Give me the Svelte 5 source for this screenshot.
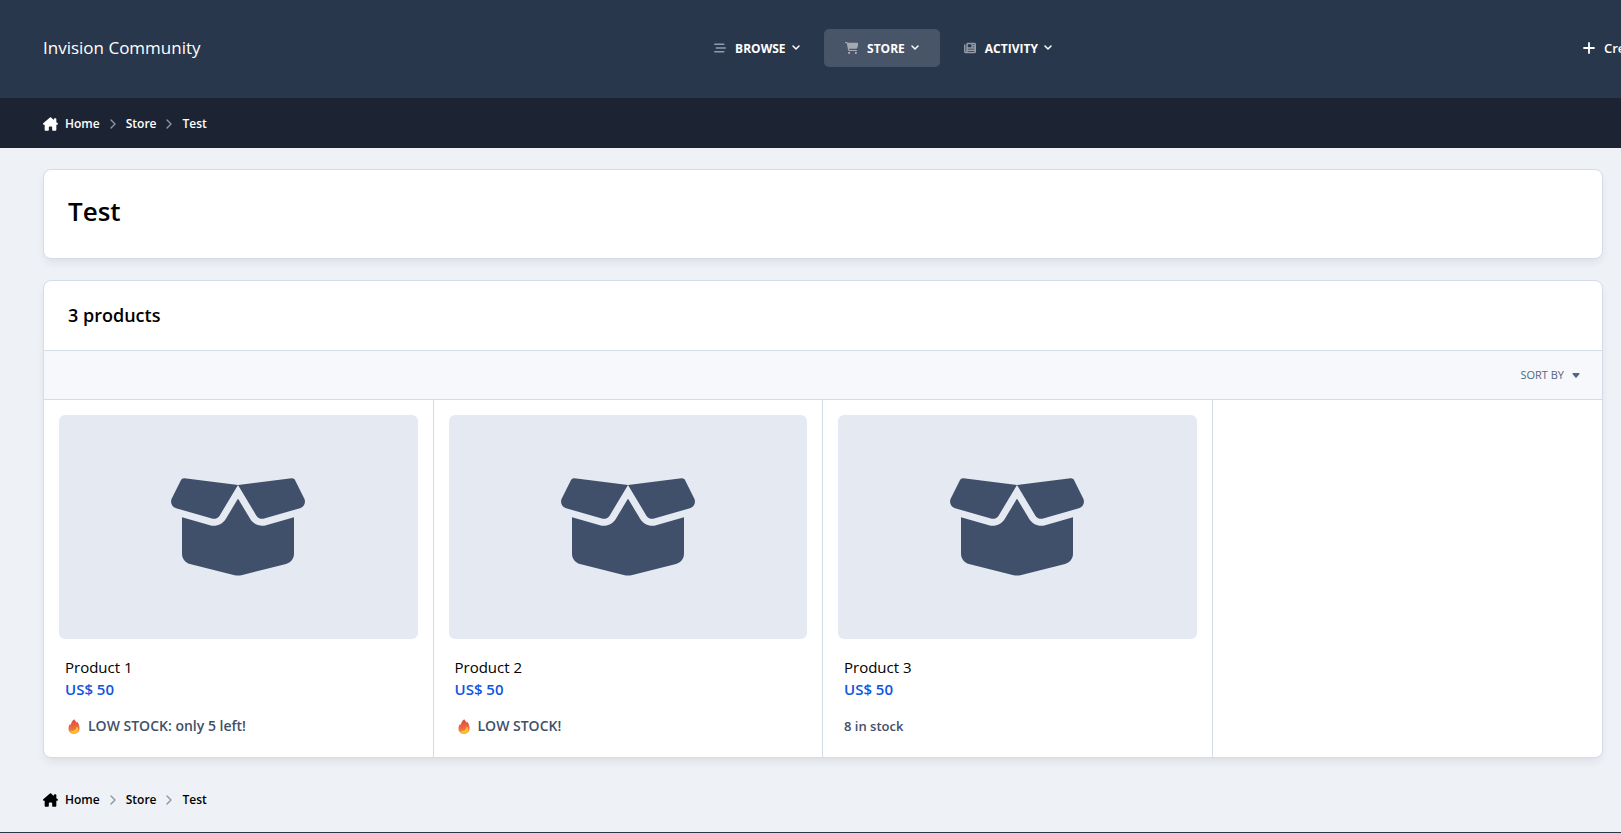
<script>
  const navItems = [
    {
      label: 'Browse',
      viewBox: '0 0 512 512',
      icon: 'M0 96C0 78.3 14.3 64 32 64H416c17.7 0 32 14.3 32 32s-14.3 32-32 32H32C14.3 128 0 113.7 0 96zM64 256c0-17.7 14.3-32 32-32H480c17.7 0 32 14.3 32 32s-14.3 32-32 32H96c-17.7 0-32-14.3-32-32zM448 416c0 17.7-14.3 32-32 32H32c-17.7 0-32-14.3-32-32s14.3-32 32-32H416c17.7 0 32 14.3 32 32z'
    },
    {
      label: 'Store',
      active: true,
      viewBox: '0 0 576 512',
      icon: 'M0 24C0 10.7 10.7 0 24 0H69.5c22 0 41.5 12.8 50.6 32h411c26.3 0 45.5 25 38.6 50.4l-41 152.3c-8.5 31.4-37 53.3-69.5 53.3H170.7l5.4 28.5c2.2 11.3 12.1 19.5 23.6 19.5H488c13.3 0 24 10.7 24 24s-10.7 24-24 24H199.7c-34.6 0-64.3-24.6-70.7-58.5L77.4 54.5c-.7-3.8-4-6.5-7.9-6.5H24C10.7 48 0 37.3 0 24zM128 464a48 48 0 1 1 96 0 48 48 0 1 1 -96 0zm336-48a48 48 0 1 1 0 96 48 48 0 1 1 0-96z'
    },
    {
      label: 'Activity',
      viewBox: '0 0 512 512',
      icon: 'M96 96c0-35.3 28.7-64 64-64H448c35.3 0 64 28.7 64 64V416c0 35.3-28.7 64-64 64H80c-44.2 0-80-35.8-80-80V128c0-17.7 14.3-32 32-32s32 14.3 32 32V400c0 8.8 7.2 16 16 16s16-7.2 16-16V96zm64 24v80c0 13.3 10.7 24 24 24H296c13.3 0 24-10.7 24-24V120c0-13.3-10.7-24-24-24H184c-13.3 0-24 10.7-24 24zm208-8c0 8.8 7.2 16 16 16h48c8.8 0 16-7.2 16-16s-7.2-16-16-16H384c-8.8 0-16 7.2-16 16zm0 96c0 8.8 7.2 16 16 16h48c8.8 0 16-7.2 16-16s-7.2-16-16-16H384c-8.8 0-16 7.2-16 16zM160 304c0 8.8 7.2 16 16 16H432c8.8 0 16-7.2 16-16s-7.2-16-16-16H176c-8.8 0-16 7.2-16 16zm0 96c0 8.8 7.2 16 16 16H432c8.8 0 16-7.2 16-16s-7.2-16-16-16H176c-8.8 0-16 7.2-16 16z'
    }
  ];

  const products = [
    { name: 'Product 1', price: 'US$ 50', stock: 'LOW STOCK: only 5 left!', low: true },
    { name: 'Product 2', price: 'US$ 50', stock: 'LOW STOCK!', low: true },
    { name: 'Product 3', price: 'US$ 50', stock: '8 in stock', low: false }
  ];

  const crumbs = ['Home', 'Store', 'Test'];
</script>

{#snippet breadcrumb(label)}
  <nav class="breadcrumb" aria-label={label}>
    <ol>
      {#each crumbs as crumb, i}
        <li>
          {#if i === 0}
            <svg class="house" viewBox="0 0 576 512" aria-hidden="true">
              <path d="M543.8 287.6c17 0 32-14 32-32.1c1-9-3-17-11-24L512 185V64c0-17.7-14.3-32-32-32H448c-17.7 0-32 14.3-32 32v36.7L309.5 7c-6-5-14-7-21-7s-15 1-22 8L10 231.5c-7 7-10 15-10 24c0 18 14 32.1 32 32.1h32v69.7c-.1 .9-.1 1.8-.1 2.8V472c0 22.1 17.9 40 40 40h16c1.2 0 2.4-.1 3.6-.2c1.5 .1 3 .2 4.5 .2H160h24c22.1 0 40-17.9 40-40V448 384c0-17.7 14.3-32 32-32h64c17.7 0 32 14.3 32 32v64 24c0 22.1 17.9 40 40 40h24 32.5c1.4 0 2.8 0 4.2-.1c1.1 .1 2.2 .1 3.3 .1h16c22.1 0 40-17.9 40-40V455.8c.3-2.6 .5-5.3 .5-8.1l-.7-160.2h32z" />
            </svg>
          {:else}
            <svg class="sep" viewBox="0 0 6 10" aria-hidden="true">
              <path d="M1 1l4 4-4 4" />
            </svg>
          {/if}
          <a href="#{crumb.toLowerCase()}">{crumb}</a>
        </li>
      {/each}
    </ol>
  </nav>
{/snippet}

<div class="page">
  <header class="header">
    <div class="header-inner">
      <a class="logo" href="#home">Invision Community</a>
      <nav class="menu" aria-label="Main">
        {#each navItems as item}
          <button class="menu-item" class:active={item.active}>
            <svg class="menu-icon" viewBox={item.viewBox} aria-hidden="true">
              <path d={item.icon} />
            </svg>
            <span>{item.label}</span>
            <svg class="chevron" viewBox="0 0 8 6" aria-hidden="true">
              <path d="M1 1l3 3 3-3" />
            </svg>
          </button>
        {/each}
      </nav>
      <button class="create">
        <svg viewBox="0 0 12 12" aria-hidden="true">
          <path d="M6 1v10M1 6h10" />
        </svg>
        <span>Create</span>
      </button>
    </div>
  </header>

  <div class="crumb-bar">
    {@render breadcrumb('Breadcrumb')}
  </div>

  <main>
    <section class="box title-box">
      <h1>Test</h1>
    </section>

    <section class="box">
      <h2>{products.length} products</h2>
      <div class="toolbar">
        <button class="sort">
          <span>Sort by</span>
          <svg viewBox="0 0 8 5" aria-hidden="true">
            <path d="M1 0h6q1 0.3 0.5 1L4.6 4.4q-0.6 0.5-1.2 0L0.5 1Q0 0.3 1 0z" />
          </svg>
        </button>
      </div>
      <ul class="grid">
        {#each products as product}
          <li class="product">
            <a class="thumb" href="#product" aria-label={product.name}>
              <svg viewBox="0 0 640 512" aria-hidden="true">
                <path d="M58.9 42.1c3-6.1 9.6-9.6 16.3-8.7L320 64 564.8 33.4c6.7-.8 13.3 2.7 16.3 8.7l41.7 83.4c9 17.9-.6 39.6-19.8 45.1L439.6 217.3c-13.9 4-28.8-1.9-36.2-14.3L320 64 236.6 203c-7.4 12.4-22.3 18.3-36.2 14.3L37.1 170.6c-19.3-5.5-28.8-27.2-19.8-45.1L58.9 42.1zM321.1 128l54.9 91.4c14.9 24.8 44.6 36.6 72.5 28.6L576 211.6v167c0 22-15 41.2-36.4 46.6l-204.1 51c-10.2 2.6-20.9 2.6-31 0l-204.1-51C79 419.7 64 400.5 64 378.5v-167L191.6 248c27.8 8 57.6-3.8 72.5-28.6L318.9 128h2.2z" />
              </svg>
            </a>
            <div class="info">
              <a class="name" href="#product">{product.name}</a>
              <span class="price">{product.price}</span>
              <p class="stock" class:low={product.low}>
                {#if product.low}
                  <svg class="flame" viewBox="0 0 12 15" aria-hidden="true">
                    <defs>
                      <linearGradient id="flame-outer" x1="0" y1="0" x2="0" y2="1">
                        <stop offset="0" stop-color="#e0483c" />
                        <stop offset="0.6" stop-color="#ec6c40" />
                        <stop offset="1" stop-color="#f5942e" />
                      </linearGradient>
                    </defs>
                    <path fill="url(#flame-outer)" d="M6.400.2C6.800 1.700 8 2.500 9 3.700c.2-.4.3-.8.2-1.300 1.500 1.900 2.300 4.300 2.300 6.800 0 3.400-2.200 5.600-5.500 5.600S.5 12.700.5 9.500c0-2.200.8-3.600 1.600-4.800.1.700.3 1.100.7 1.400C3.100 3.500 4.300 1.500 6.400.2z" />
                    <path fill="#fdbf30" d="M8.700 7.200c1.100 1.100 1.800 2.400 1.700 3.900-.2 2.100-1.800 3.400-4.100 3.400-2.200 0-3.700-1.100-3.900-2.900 1 .6 2.200.6 3.200-.1C7.200 10.900 8.600 9.500 8.700 7.200z" />
                  </svg>
                {/if}
                <span>{product.stock}</span>
              </p>
            </div>
          </li>
        {/each}
      </ul>
    </section>

    {@render breadcrumb('Breadcrumb, bottom')}
  </main>

  <footer></footer>
</div>

<style>
  :global(body) {
    background: #eef1f6;
  }

  .page {
    overflow: hidden;
    font-family: 'Open Sans', 'Noto Sans', sans-serif;
    font-size: 14px;
    color: #000;
  }

  a {
    color: inherit;
    text-decoration: none;
  }

  button {
    display: flex;
    align-items: center;
    padding: 0;
    border: 0;
    background: none;
    color: inherit;
    font: inherit;
    cursor: pointer;
  }

  .header {
    background: #29374c;
    color: #fff;
  }

  .header-inner {
    display: grid;
    grid-template-columns: 1fr auto 1fr;
    align-items: center;
    margin-right: -145px;
    padding: 29px 43px 31px;
  }

  .logo {
    font-size: 17px;
    line-height: 24px;
  }

  .menu {
    display: flex;
    gap: 3px;
  }

  .menu-item {
    height: 38px;
    padding: 0 21px;
    border-radius: 5px;
    font-size: 12px;
    font-weight: 700;
    text-transform: uppercase;
  }

  .menu-item.active {
    background: #485467;
  }

  .menu-icon {
    height: 12px;
    margin-right: 9px;
    fill: #fff;
    opacity: 0.5;
  }

  .chevron {
    width: 8px;
    height: 6px;
    margin-left: 6px;
    fill: none;
    stroke: #fff;
    stroke-width: 1.5;
    stroke-linecap: round;
    stroke-linejoin: round;
  }

  .create {
    justify-self: end;
    width: 140px;
    gap: 9px;
    font-size: 13px;
    font-weight: 600;
  }

  .create svg {
    width: 12px;
    height: 12px;
    stroke: #fff;
    stroke-width: 1.8;
    stroke-linecap: round;
  }

  .crumb-bar {
    padding: 16px 43px 14px;
    background: #1c2434;
    color: #fff;
  }

  .breadcrumb ol {
    display: flex;
    margin: 0;
    padding: 0;
    list-style: none;
    font-size: 12px;
    font-weight: 600;
    line-height: 20px;
  }

  .breadcrumb li {
    display: flex;
    align-items: center;
  }

  .house {
    width: 15px;
    height: 14px;
    margin-right: 7px;
    fill: currentColor;
  }

  .sep {
    width: 6px;
    height: 10px;
    margin: 0 10px;
    fill: none;
    stroke: #8d95a3;
    stroke-width: 1.4;
    stroke-linecap: round;
    stroke-linejoin: round;
  }

  main {
    padding: 21px 18px 22px 43px;
  }

  .box {
    margin-bottom: 21px;
    border: 1px solid #d5dbe7;
    border-radius: 8px;
    background: #fff;
    box-shadow: 0 5px 10px -2px rgba(30, 41, 59, 0.09);
    overflow: hidden;
  }

  .title-box {
    padding: 23px 24px 29px;
  }

  h1 {
    margin: 0;
    font-size: 26px;
    font-weight: 600;
    line-height: 36px;
  }

  h2 {
    margin: 0;
    padding: 20px 24px;
    font-size: 18px;
    font-weight: 600;
    line-height: 29px;
  }

  .toolbar {
    display: flex;
    justify-content: flex-end;
    padding: 14px 22px;
    border: solid #d5dbe7;
    border-width: 1px 0;
    background: #f6f8fc;
  }

  .sort {
    gap: 8px;
    color: #556480;
    font-size: 11px;
    font-weight: 500;
    line-height: 20px;
    text-transform: uppercase;
  }

  .sort svg {
    width: 8px;
    height: 5px;
    fill: currentColor;
  }

  .grid {
    display: grid;
    grid-template-columns: repeat(4, 1fr);
    margin: 0;
    padding: 0;
    list-style: none;
  }

  .product {
    padding: 15px 15px 21px;
    border-right: 1px solid #d5dbe7;
  }

  .thumb {
    display: flex;
    align-items: center;
    justify-content: center;
    aspect-ratio: 16 / 10;
    border-radius: 6px;
    background: #e4e9f2;
  }

  .thumb svg {
    width: 140px;
    fill: #41506a;
  }

  .info {
    display: flex;
    flex-direction: column;
    align-items: flex-start;
    padding: 17px 6px 0;
  }

  .name {
    font-size: 15px;
    line-height: 22px;
  }

  .price {
    color: #0f55e0;
    font-size: 15px;
    font-weight: 600;
    line-height: 22px;
  }

  .stock {
    display: flex;
    align-items: center;
    margin: 16px 0 0;
    color: #41506a;
    font-size: 13px;
    font-weight: 600;
    line-height: 20px;
  }

  .stock.low {
    font-size: 14px;
  }

  .flame {
    width: 12px;
    height: 15px;
    margin: 0 8px 0 3px;
  }

  main > .breadcrumb {
    margin-top: 32px;
  }

  footer {
    height: 1px;
    background: #29374c;
  }
</style>
